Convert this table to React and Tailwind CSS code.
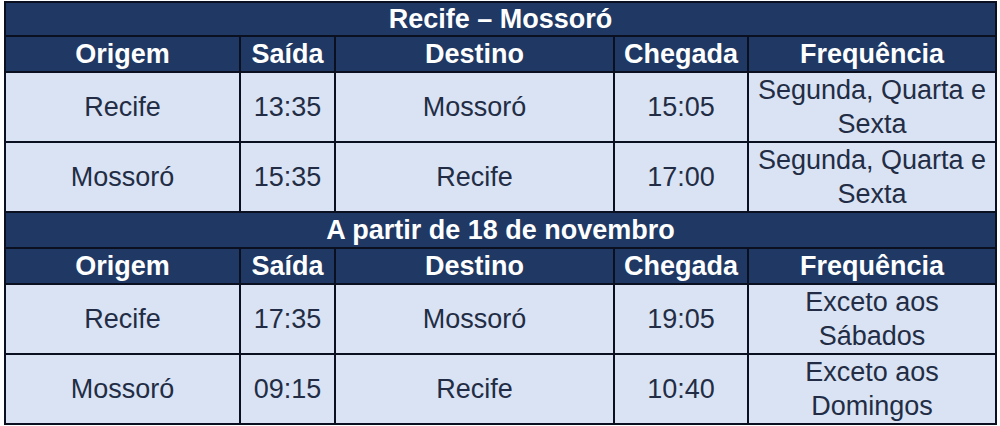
import React from 'react';

const sections = [
  {
    title: 'Recife – Mossoró',
    rows: [
      ['Recife', '13:35', 'Mossoró', '15:05', 'Segunda, Quarta e Sexta'],
      ['Mossoró', '15:35', 'Recife', '17:00', 'Segunda, Quarta e Sexta'],
    ],
  },
  {
    title: 'A partir de 18 de novembro',
    rows: [
      ['Recife', '17:35', 'Mossoró', '19:05', 'Exceto aos Sábados'],
      ['Mossoró', '09:15', 'Recife', '10:40', 'Exceto aos Domingos'],
    ],
  },
];

const headers = ['Origem', 'Saída', 'Destino', 'Chegada', 'Frequência'];

const App = () => {
  return (
    <div className="bg-white w-[1000px] h-[426px] pl-[4px] pt-[1px] overflow-hidden" style={{ fontFamily: '"Liberation Sans", Arial, sans-serif' }}>
      <table className="table-fixed border-collapse w-[991px] text-[27px] leading-[34px] text-center">
        <colgroup>
          <col className="w-[235px]" />
          <col className="w-[95px]" />
          <col className="w-[279px]" />
          <col className="w-[134px]" />
          <col className="w-[248px]" />
        </colgroup>
        <tbody>
          {sections.map((section, s) => (
            <React.Fragment key={s}>
              {/* Section title */}
              <tr>
                <td
                  colSpan={5}
                  className={`bg-[#1f3864] text-white font-bold leading-[30px] border-2 border-[#0b1020] p-0 ${s === 0 ? 'h-[34px]' : 'h-[36px]'}`}
                >
                  {section.title}
                </td>
              </tr>
              {/* Column headers */}
              <tr>
                {headers.map((h) => (
                  <td key={h} className="bg-[#1f3864] text-white font-bold leading-[30px] border-2 border-[#0b1020] h-[36px] p-0">
                    {h}
                  </td>
                ))}
              </tr>
              {section.rows.map((row, r) => (
                <tr key={r}>
                  {row.map((cell, c) => (
                    <td
                      key={c}
                      className="bg-[#dae3f3] text-[#222d45] border-2 border-[#0b1020] h-[70px] px-1 py-0"
                    >
                      {cell}
                    </td>
                  ))}
                </tr>
              ))}
            </React.Fragment>
          ))}
        </tbody>
      </table>
    </div>
  );
};

export default App;
